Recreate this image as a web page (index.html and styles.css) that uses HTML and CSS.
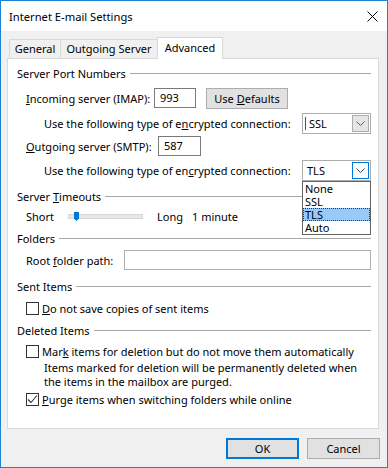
FILE: index.html
```html
<!DOCTYPE html>
<html lang="en">
<head>
  <meta charset="UTF-8">
  <title>Internet E-mail Settings</title>
  <link rel="stylesheet" href="styles.css">
</head>
<body>
  <div class="window">
    <div class="titlebar">
      <span class="title">Internet E-mail Settings</span>
      <svg class="close" width="11" height="11" viewBox="0 0 11 11">
        <path d="M0.5 0.5 L10.5 10.5 M10.5 0.5 L0.5 10.5" stroke="#000" stroke-width="1" fill="none"/>
      </svg>
    </div>

    <div class="content">
      <div class="tabs">
        <div class="tab tab-general">General</div>
        <div class="tab tab-outgoing">Outgoing Server</div>
        <div class="tab tab-advanced active">Advanced</div>
      </div>

      <div class="panel">
        <div class="group-title"><span>Server Port Numbers</span></div>

        <div class="row row-incoming">
          <span class="label label-incoming"><u>I</u>ncoming server (IMAP):</span>
          <div class="textbox port-in">993</div>
          <div class="button btn-defaults">Use <u>D</u>efaults</div>
        </div>

        <div class="row row-enc row-enc1">
          <span>Use the following type of e<u>n</u>crypted connection:</span>
          <div class="combo">
            <span class="caret"></span>
            <span class="combo-value">SSL</span>
            <span class="combo-arrow">
              <svg width="9" height="5" viewBox="0 0 9 5"><path d="M0.5 0.5 L4.5 4.5 L8.5 0.5" stroke="#606060" fill="none"/></svg>
            </span>
          </div>
        </div>

        <div class="row row-outgoing">
          <span class="label label-outgoing"><u>O</u>utgoing server (SMTP):</span>
          <div class="textbox port-out">587</div>
        </div>

        <div class="row row-enc row-enc2">
          <span>Use the following type of en<u>c</u>rypted connection:</span>
          <div class="combo-wrap">
            <div class="combo">
              <span class="combo-value tls">TLS</span>
              <span class="combo-arrow focused">
                <svg width="9" height="5" viewBox="0 0 9 5"><path d="M0.5 0.5 L4.5 4.5 L8.5 0.5" stroke="#404040" fill="none"/></svg>
              </span>
            </div>
            <ul class="dropdown">
              <li>None</li>
              <li>SSL</li>
              <li class="selected">TLS</li>
              <li>Auto</li>
            </ul>
          </div>
        </div>

        <div class="group-title gt-timeouts"><span>Server <u>T</u>imeouts</span></div>

        <div class="row row-slider">
          <span class="label label-short">Short</span>
          <div class="slider">
            <svg class="thumb" width="5" height="9" viewBox="0 0 5 9"><path d="M0 0 H5 V6.5 L2.5 9 L0 6.5 Z" fill="#0078d7"/></svg>
          </div>
          <span class="long">Long</span>
          <span>1 minute</span>
        </div>

        <div class="group-title gt-folders"><span>Folders</span></div>

        <div class="row row-root">
          <span class="label label-root">Root <u>f</u>older path:</span>
          <div class="textbox root-path"></div>
        </div>

        <div class="group-title gt-sent"><span>Sent Items</span></div>

        <div class="row row-check cb-sent">
          <span class="checkbox"></span>
          <span><u>D</u>o not save copies of sent items</span>
        </div>

        <div class="group-title gt-deleted"><span>Deleted Items</span></div>

        <div class="row row-check cb-mark">
          <span class="checkbox"></span>
          <span>Mar<u>k</u> items for deletion but do not move them automatically</span>
        </div>

        <p class="note">Items marked for deletion will be permanently deleted when<br>the items in the mailbox are purged.</p>

        <div class="row row-check cb-purge">
          <span class="checkbox checked">
            <svg width="11" height="11" viewBox="0 0 11 11"><path d="M1 5.5 L4 8.5 L10 1.5" stroke="#333" stroke-width="1.1" fill="none"/></svg>
          </span>
          <span><u>P</u>urge items when switching folders while online</span>
        </div>
      </div>

      <div class="buttons">
        <div class="button btn-ok">OK</div>
        <div class="button btn-cancel">Cancel</div>
      </div>
    </div>
  </div>
</body>
</html>
```

FILE: styles.css
```css
* {
  margin: 0;
  padding: 0;
  box-sizing: border-box;
}

body {
  font-family: 'Noto Sans', sans-serif;
  font-size: 11px;
  color: #000;
  background: #fff;
  white-space: nowrap;
}

u {
  text-decoration: underline;
  text-underline-offset: 1px;
}

.window {
  width: 388px;
  height: 468px;
  border: 1px solid #1883d7;
  background: #f0f0f0;
  display: flex;
  flex-direction: column;
}

/* title bar */
.titlebar {
  height: 30px;
  flex: none;
  background: #fff;
  display: flex;
  align-items: center;
  justify-content: space-between;
  padding: 0 9px 0 8px;
}

.title {
  font-size: 11.2px;
}

.close {
  display: block;
}

.content {
  padding: 6px 8px 0 6px;
}

/* tabs */
.tabs {
  display: flex;
  align-items: flex-end;
  height: 22px;
  margin-left: 2px;
  margin-bottom: -1px;
  position: relative;
  z-index: 1;
}

.tab {
  height: 19px;
  margin-bottom: 1px;
  border: 1px solid #d9d9d9;
  border-bottom: none;
  background: #f0f0f0;
  text-align: center;
  line-height: 17px;
}

.tab + .tab {
  margin-left: -1px;
}

.tab-general { width: 52px; }
.tab-outgoing { width: 98px; }
.tab-advanced { width: 66px; }

.tab.active {
  height: 22px;
  margin-bottom: 0;
  background: #fff;
  line-height: 19px;
}

/* panel */
.panel {
  height: 371px;
  background: #fff;
  border: 1px solid #d9d9d9;
  padding: 5px 7px 0 9px;
}

.group-title {
  display: flex;
  align-items: center;
  height: 18px;
}

.group-title::after {
  content: "";
  flex: 1;
  height: 1px;
  background: #a8a8a8;
  margin-left: 4px;
}

.row {
  display: flex;
  align-items: center;
  height: 22px;
  padding-left: 9px;
}

.row-incoming { margin-top: 5px; }
.row-enc1 { margin-top: 3px; }
.row-outgoing { margin-top: 1px; }
.row-enc2 { margin-top: 2px; }
.gt-timeouts { margin-top: 6px; }
.row-slider { margin-top: 2px; height: 18px; }
.gt-folders { margin-top: 4px; }
.row-root { margin-top: 2px; }
.gt-sent { margin-top: 6px; }
.cb-sent { margin-top: 4px; }
.gt-deleted { margin-top: 4px; }
.cb-mark { margin-top: 3px; }
.cb-purge { margin-top: 1px; }

.label-incoming { width: 128px; }
.label-outgoing { width: 132px; }
.label-short { width: 42px; }
.label-root { width: 98px; }

.textbox {
  height: 20px;
  border: 1px solid #7a7a7a;
  background: #fff;
  padding-left: 5px;
  line-height: 18px;
}

.port-in { width: 42px; }
.port-out { width: 43px; }

.root-path {
  flex: 1;
  border-color: #abadb3;
}

.button {
  height: 21px;
  border: 1px solid #adadad;
  background: #e1e1e1;
  text-align: center;
  line-height: 19px;
}

.btn-defaults {
  width: 82px;
  margin-left: 10px;
}

/* combo boxes */
.row-enc {
  padding-left: 27px;
  justify-content: space-between;
}

.combo-wrap {
  position: relative;
}

.combo {
  width: 69px;
  height: 21px;
  border: 1px solid #acacac;
  background: #fff;
  display: flex;
  align-items: center;
  position: relative;
}

.caret {
  width: 1px;
  height: 13px;
  background: #0f5fb0;
  margin-left: 2px;
}

.combo-value {
  flex: 1;
  padding-left: 3px;
}

.combo-value.tls {
  padding-left: 4px;
}

.combo-arrow {
  width: 17px;
  height: 17px;
  margin-right: 1px;
  border: 1px solid #adadad;
  background: #e5e5e5;
  display: flex;
  align-items: center;
  justify-content: center;
}

.combo-arrow.focused {
  border-color: #0078d7;
  background: #f7fbfe;
}

.dropdown {
  position: absolute;
  top: 100%;
  left: 0;
  width: 69px;
  list-style: none;
  background: #fff;
  border: 1px solid #646464;
  z-index: 2;
}

.dropdown li {
  height: 13px;
  line-height: 13px;
  padding-left: 2px;
}

.dropdown li.selected {
  background: #99c9f7;
  outline: 1px dotted #333;
  outline-offset: -1px;
}

/* slider */
.slider {
  position: relative;
  width: 75px;
  height: 5px;
  background: #e7e7e7;
  border: 1px solid #d6d6d6;
  margin-right: 14px;
}

.thumb {
  position: absolute;
  left: 5px;
  top: -3px;
}

.long {
  margin-right: 9px;
}

/* checkboxes */
.row-check {
  height: 18px;
}

.checkbox {
  width: 13px;
  height: 13px;
  border: 1px solid #333;
  background: #fff;
  margin-right: 3px;
  display: flex;
  align-items: center;
  justify-content: center;
}

.note {
  margin-top: 1px;
  padding-left: 27px;
  line-height: 14px;
}

/* dialog buttons */
.buttons {
  display: flex;
  justify-content: flex-end;
  gap: 8px;
  margin-top: 9px;
  margin-right: -1px;
}

.btn-ok,
.btn-cancel {
  width: 73px;
}

.btn-ok {
  border: 2px solid #0078d7;
  line-height: 17px;
}
```
